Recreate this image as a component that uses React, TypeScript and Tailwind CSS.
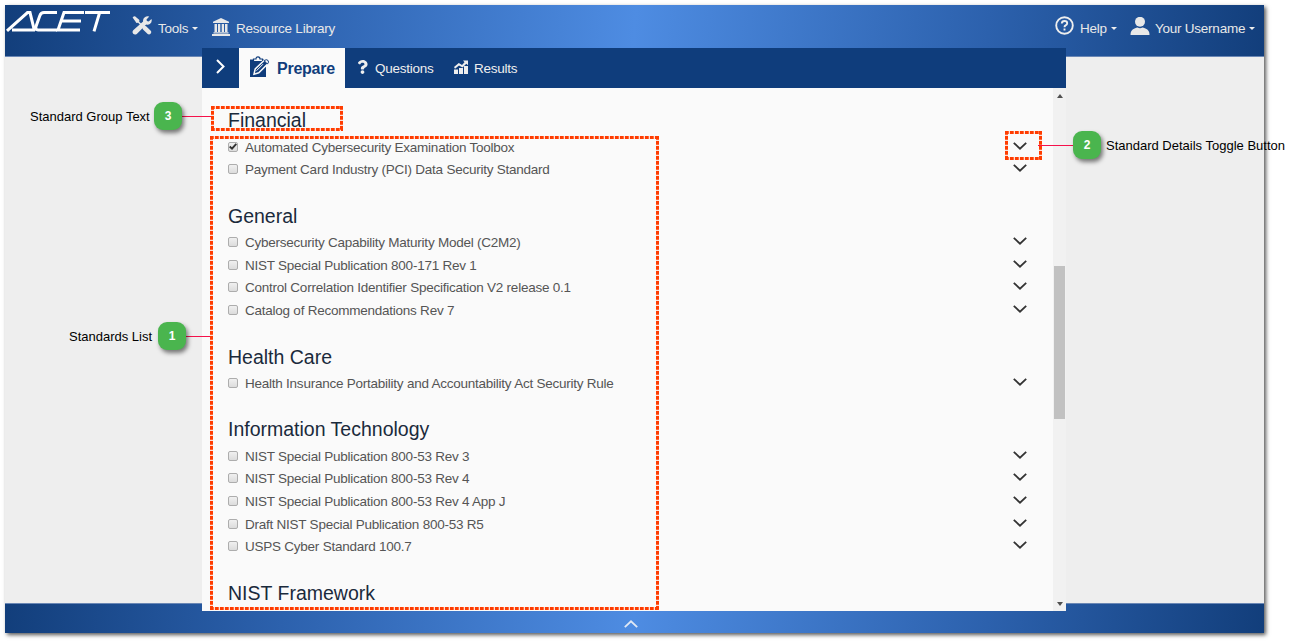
import React from "react";
import { FaQuestion } from "react-icons/fa";

const groups = [
  { title: "Financial", items: ["Automated Cybersecurity Examination Toolbox", "Payment Card Industry (PCI) Data Security Standard"] },
  {
    title: "General",
    items: [
      "Cybersecurity Capability Maturity Model (C2M2)",
      "NIST Special Publication 800-171 Rev 1",
      "Control Correlation Identifier Specification V2 release 0.1",
      "Catalog of Recommendations Rev 7",
    ],
  },
  { title: "Health Care", items: ["Health Insurance Portability and Accountability Act Security Rule"] },
  {
    title: "Information Technology",
    items: [
      "NIST Special Publication 800-53 Rev 3",
      "NIST Special Publication 800-53 Rev 4",
      "NIST Special Publication 800-53 Rev 4 App J",
      "Draft NIST Special Publication 800-53 R5",
      "USPS Cyber Standard 100.7",
    ],
  },
  { title: "NIST Framework", items: [] },
];

function Logo() {
  return (
    <svg className="h-[22px] w-[105px] shrink-0" viewBox="0 0 105 22" fill="none" stroke="#fff" strokeWidth="3" aria-label="ACET">
      <path d="M1 20.8 L21.5 2.6 H24 L28.5 20.8 M6 19.9 H29" />
      <path d="M51 2.6 H38 Q35 2.6 33.8 5.7 L30 16.5 Q29.2 19.9 32 19.9 H51" />
      <path d="M78 2.6 H58 L52 19.9 H74 M55 11 H75" />
      <path d="M79 2.6 H104 M93.5 3 L88 21.4" />
    </svg>
  );
}

function ToolsIcon() {
  return (
    <svg className="h-[19px] w-[20px]" viewBox="0 0 20 19" fill="#e8e8e8">
      <path d="M.6 1.5 Q1.6 .2 3 .3 L7.4 4.1 7.2 5.8 11.6 9.9 Q13.2 9.3 14.4 10.5 L19 15 Q19.8 16.4 18.6 17.7 17.2 19 15.7 18 L11 13.4 Q10 12.2 10.4 10.9 L6.1 6.8 4.5 7.1Z" />
      <path d="M12.8 1.3 Q14.8 -.3 17.3 .6 L14.5 3.5 14.9 5.1 16.7 5.6 19.5 2.9 Q20.4 6.3 17.9 8.1 16.2 9.1 14.2 8.5 L4.8 17.9 Q2.8 19.3 1.2 17.8 -.2 16.1 1.2 14.3 L11.1 5.6 Q10.6 3 12.8 1.3Z" />
    </svg>
  );
}

function LibraryIcon() {
  return (
    <svg className="h-[18px] w-[18px]" viewBox="0 0 18 18" fill="#e8e8e8">
      <path d="M9 0 17 3.8V5H1V3.8ZM2.5 6H5V14H2.5ZM6 6H8.3V14H6ZM9.7 6H12V14H9.7ZM13 6H15.5V14H13ZM1.5 14.3H16.5V15.4H1.5ZM0 16H18V18H0Z" />
    </svg>
  );
}

function PrepareIcon() {
  return (
    <svg className="h-[22px] w-[21px]" viewBox="0 0 21 22" fill="none">
      <path d="M1 3.5 H17 V21 H1Z" fill="#103d7c" />
      <path d="M4.5 5.6 V3 H7 Q7 .8 9 .8 Q11 .8 11 3 H13.5 V5.6Z" fill="#fafafa" stroke="#103d7c" strokeWidth="1.2" />
      <path d="M5 18.2 L6.2 13 15.6 4 Q17.3 2.9 18.9 4.4 20.3 6 19.1 7.5 L9.8 16.8Z" fill="#103d7c" stroke="#fafafa" strokeWidth="1.5" />
      <path d="M15.2 4.7 Q17.3 2.8 19 4.4 20.4 6.1 18.4 8.1Z" fill="#fafafa" stroke="#103d7c" />
      <path d="M7.5 14.7 14 8.2" stroke="#fafafa" />
    </svg>
  );
}

function Chevron({ className }: { className: string }) {
  return (
    <svg className={className} viewBox="0 0 14 8" fill="none" stroke="currentColor" strokeWidth="1.8">
      <path d="M.8 .8 L7 6.7 13.2 .8" />
    </svg>
  );
}

function Caret() {
  return (
    <svg className="h-[3px] w-[6px]" viewBox="0 0 6 3" fill="#eee"><path d="M0 0H6L3 3Z" /></svg>
  );
}

function Header() {
  return (
    <header className="flex h-[52px] border-b border-[#6a87b5] bg-[linear-gradient(95deg,#123e7b_0%,#2c61ad_22%,#4e8ce2_50%,#2c61ad_78%,#123e7b_100%)] text-[13.5px] tracking-[-0.24px] leading-[16px] text-[#e8e8e8]">
      <div className="ml-[1px] mt-[5px] mr-[1px]"><Logo /></div>
      <nav className="flex flex-1">
        <div className="ml-[20px] mt-[11px] w-[20px]"><ToolsIcon /></div>
        <span className="ml-[6px] mt-[16px] w-[30px]">Tools</span>
        <span className="ml-[4px] mt-[22px]"><Caret /></span>
        <div className="ml-[14px] mt-[13px] w-[18px]"><LibraryIcon /></div>
        <span className="ml-[6px] mt-[16px] whitespace-nowrap">Resource Library</span>
      </nav>
      <div className="flex">
        <svg className="mt-[11px] h-[19px] w-[19px]" viewBox="0 0 19 19" fill="none" stroke="#eee">
          <circle cx="9.5" cy="9.5" r="8.3" strokeWidth="1.9" />
          <path d="M6.8 7.5 Q6.9 5 9.5 5 Q12.2 5 12.2 7.2 Q12.2 8.6 10.6 9.4 Q9.5 10 9.5 11.3 M9.5 12.4V14.4" strokeWidth="1.9" />
        </svg>
        <span className="ml-[6px] mt-[16px] w-[27px]">Help</span>
        <span className="ml-[4px] mt-[22px]"><Caret /></span>
        <svg className="ml-[13px] mt-[12px] h-[19px] w-[20px]" viewBox="0 0 20 19" fill="#e8e8e8">
          <ellipse cx="10" cy="4.8" rx="5" ry="5" />
          <path d="M.5 18 Q.3 13 4.5 11.4 Q7 10.4 7.5 10.5 Q10 12 12.5 10.5 Q13 10.4 15.5 11.4 Q19.7 13 19.5 18Z" />
        </svg>
        <span className="ml-[5px] mt-[16px] w-[90px] whitespace-nowrap">Your Username</span>
        <span className="ml-[4px] mr-[9px] mt-[22px]"><Caret /></span>
      </div>
    </header>
  );
}

function Tabs() {
  return (
    <div className="flex h-[40px] shrink-0 bg-[#0f3d7c] text-[13.5px] tracking-[-0.24px] leading-[16px] text-[#eee]">
      <div className="flex w-[37px] items-center justify-center">
        <svg className="-mt-[4px] h-[15px] w-[9px]" viewBox="0 0 9 15" fill="none" stroke="#fff" strokeWidth="2"><path d="M1 1 L7.5 7.5 1 14" /></svg>
      </div>
      <div className="flex w-[106px] bg-[#fafafa] text-[16px] font-bold leading-[18px] text-[#103d7c]">
        <div className="ml-[10px] mt-[8px] w-[21px]"><PrepareIcon /></div>
        <span className="ml-[7px] mt-[12px]">Prepare</span>
      </div>
      <FaQuestion className="ml-[12px] mt-[12px] h-[14px] w-[11px]" />
      <span className="ml-[7px] mt-[13px] w-[59px]">Questions</span>
      <svg className="ml-[20px] mt-[12px] h-[14px] w-[15px]" viewBox="0 0 15 14" fill="#eee">
        <path d="M0 9.5H4V14H0ZM5 8H9V14H5ZM10 6H14V14H10Z" />
        <path d="M0 7 4.8 3 8 5 10.5 2.2 9 .5H14V5.2L12.3 3.8 8.5 7.5 5 5.4 1 8.7Z" />
      </svg>
      <span className="ml-[5px] mt-[13px]">Results</span>
    </div>
  );
}

function Checkbox({ checked }: { checked: boolean }) {
  return (
    <span className="mt-[-2px] flex h-[10px] w-[10px] shrink-0 items-center justify-center rounded-[2px] border border-[#adadad] bg-linear-to-b from-[#f0f0f0] to-[#dcdcdc]">
      {checked && (
        <svg className="h-[7px] w-[8px]" viewBox="0 0 8 7" fill="none" stroke="#333" strokeWidth="1.9"><path d="M.7 3.5 3 5.6 7.3 .8" /></svg>
      )}
    </span>
  );
}

function Standards() {
  return (
    <div className="min-w-0 flex-1 overflow-hidden pl-[26px] pr-[26px] pt-[20.4px]">
      {groups.map((group, g) => (
        <section key={group.title} className="mb-[22px]">
          <h2 className="mb-[4px] h-[24px] text-[19.5px] leading-[24px] text-[#1a2a3c]">{group.title}</h2>
          {group.items.map((item, i) => (
            <label key={item} className="flex h-[22.7px] items-center">
              <Checkbox checked={g === 0 && i === 0} />
              <span className="ml-[7px] flex-1 whitespace-nowrap text-[13.5px] tracking-[-0.24px] leading-[16px] text-[#555]">{item}</span>
              <Chevron className="-mt-[4px] h-[8px] w-[14px] text-[#333]" />
            </label>
          ))}
        </section>
      ))}
    </div>
  );
}

function Scrollbar() {
  return (
    <div className="flex w-[13px] flex-col items-center bg-[#f1f1f1]">
      <svg className="mt-[6px] h-[4px] w-[6px]" viewBox="0 0 6 4" fill="#505050"><path d="M0 4 3 0 6 4Z" /></svg>
      <div className="mt-[168px] h-[153px] w-[11px] bg-[#c1c1c1]" />
      <svg className="mb-[5px] mt-auto h-[4px] w-[6px]" viewBox="0 0 6 4" fill="#505050"><path d="M0 0H6L3 4Z" /></svg>
    </div>
  );
}

function Outline({ x, y, w, h }: { x: number; y: number; w: number; h: number }) {
  return (
    <g fill="none" strokeWidth="3">
      <rect x={x + 1.5} y={y + 1.5} width={w - 3} height={h - 3} stroke="#ffe0d8" />
      <path d={`M${x} ${y + 1.5}H${x + w}M${x} ${y + h - 1.5}H${x + w}M${x + 1.5} ${y}V${y + h}M${x + w - 1.5} ${y}V${y + h}`} stroke="#ff3c00" strokeDasharray="3.7 1.3" />
    </g>
  );
}

function Badge({ n }: { n: number }) {
  return (
    <span className="flex h-[28px] w-[28px] items-center justify-center rounded-[9px] bg-[#4ab54e] text-[12px] font-bold text-white shadow-[2px_3px_4px_rgba(0,0,0,0.5)]">{n}</span>
  );
}

function Callouts() {
  return (
    <div className="absolute inset-0 z-20 text-[13px] leading-[30px] text-black">
      <svg className="absolute inset-0" width="1301" height="642">
        <Outline x={210} y={136} w={449} h={474} />
        <Outline x={211} y={106} w={132} h={25} />
        <Outline x={1005} y={131} w={37} h={29} />
        <path d="M182 116.5H211M186 336.5H210M1038 145.5H1073" stroke="#f5114b" />
      </svg>
      <div className="absolute left-[30px] top-[102px] flex w-[152px] justify-between whitespace-nowrap">Standard Group Text<Badge n={3} /></div>
      <div className="absolute left-[69px] top-[322px] flex w-[117px] justify-between whitespace-nowrap">Standards List<Badge n={1} /></div>
      <div className="absolute left-[1073px] top-[131px] flex gap-[5px] whitespace-nowrap"><Badge n={2} />Standard Details Toggle Button</div>
    </div>
  );
}

export default function App() {
  return (
    <div className="relative h-[642px] w-[1301px] overflow-hidden bg-white p-[5px] font-['Liberation_Sans',Arial,sans-serif]">
      <div className="flex h-[628px] w-[1259px] flex-col bg-[#eee] shadow-[2px_2px_4px_rgba(0,0,0,0.65)]">
        <Header />
        <main className="relative z-10 h-[546px]">
          <div className="-mt-[9px] ml-[197px] flex h-[563px] w-[864px] flex-col bg-[#fafafa]">
            <Tabs />
            <div className="flex min-h-0 flex-1"><Standards /><Scrollbar /></div>
          </div>
        </main>
        <footer className="flex h-[30px] justify-center border-t border-[#6a87b5] bg-[linear-gradient(95deg,#123e7b_0%,#2c61ad_22%,#4e8ce2_50%,#2c61ad_78%,#123e7b_100%)]">
          <Chevron className="ml-[-7px] mt-[16px] h-[8px] w-[14px] rotate-180 text-[#e0e8f4]" />
        </footer>
      </div>
      <Callouts />
    </div>
  );
}
